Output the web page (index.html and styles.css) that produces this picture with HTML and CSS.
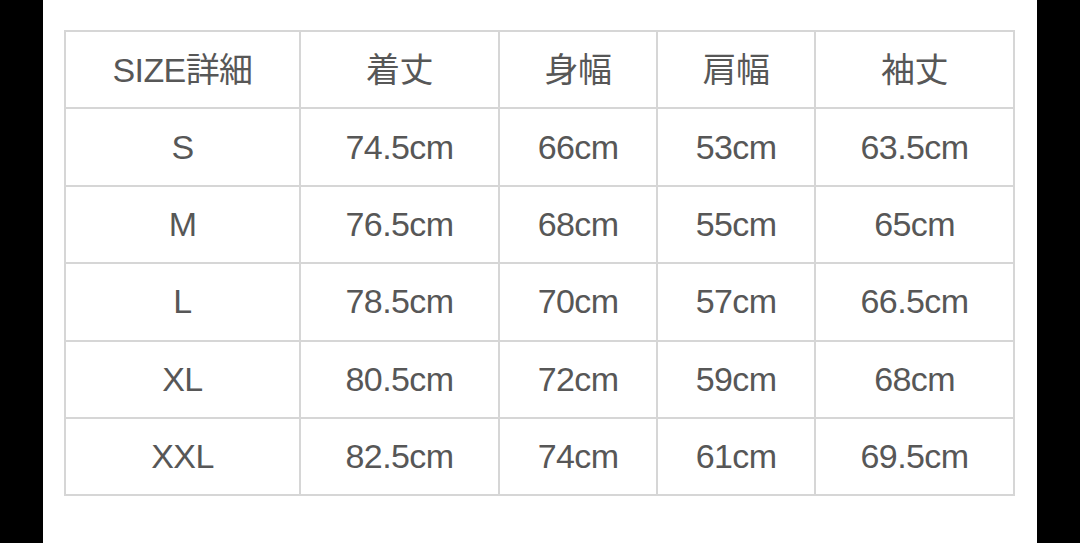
FILE: index.html
```html
<!DOCTYPE html>
<html lang="ja">
<head>
<meta charset="utf-8">
<link rel="stylesheet" href="styles.css">
</head>
<body>
<div class="frame">
  <div class="side"></div>
  <main class="page">
    <table class="sizes">
      <colgroup>
        <col class="c1"><col class="c2"><col class="c3"><col class="c4"><col class="c5">
      </colgroup>
      <tr class="head"><td>SIZE詳細</td><td>着丈</td><td>身幅</td><td>肩幅</td><td>袖丈</td></tr>
      <tr><td>S</td><td>74.5cm</td><td>66cm</td><td>53cm</td><td>63.5cm</td></tr>
      <tr><td>M</td><td>76.5cm</td><td>68cm</td><td>55cm</td><td>65cm</td></tr>
      <tr><td>L</td><td>78.5cm</td><td>70cm</td><td>57cm</td><td>66.5cm</td></tr>
      <tr><td>XL</td><td>80.5cm</td><td>72cm</td><td>59cm</td><td>68cm</td></tr>
      <tr><td>XXL</td><td>82.5cm</td><td>74cm</td><td>61cm</td><td>69.5cm</td></tr>
    </table>
  </main>
  <div class="side"></div>
</div>
</body>
</html>
```
FILE: styles.css
```css
html, body {
  margin: 0;
  padding: 0;
  height: 100%;
  background: #000;
}
.frame {
  display: flex;
  height: 543px;
  width: 1080px;
}
.side {
  width: 43px;
  background: #000;
  flex: none;
}
.page {
  flex: 1;
  background: #fff;
  padding: 30px 0 0 21px;
  box-sizing: border-box;
}
.sizes {
  border-collapse: collapse;
  table-layout: fixed;
  width: 949px;
  font-family: "Liberation Sans", "Noto Sans CJK JP", sans-serif;
  font-size: 34px;
  color: #575757;
}
.c1 { width: 235px; }
.c2 { width: 199px; }
.c3 { width: 158px; }
.c4 { width: 158px; }
.c5 { width: 199px; }
.sizes td {
  border: 2px solid #d6d6d6;
  text-align: center;
  vertical-align: middle;
  height: 75.4px;
  padding: 0;
  letter-spacing: -0.6px;
}
.sizes .head td {
  height: 71.4px;
  padding-bottom: 4px;
}
```
